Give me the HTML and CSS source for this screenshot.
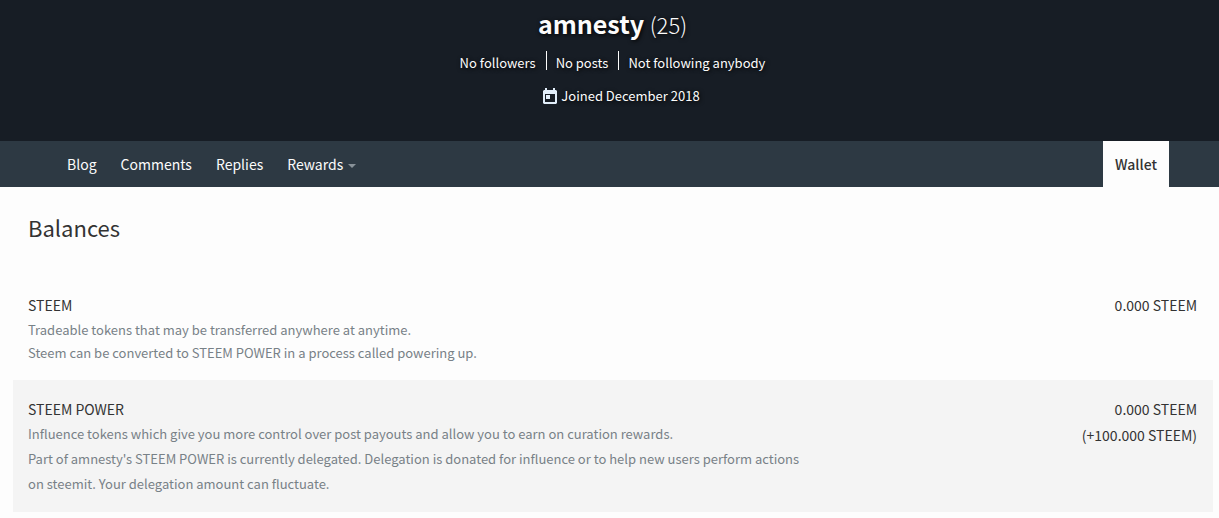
FILE: index.html
```html
<!DOCTYPE html>
<html lang="en">
<head>
    <meta charset="UTF-8">
    <meta name="viewport" content="width=device-width, initial-scale=1.0">
    <title>amnesty - Wallet</title>
    <link rel="stylesheet" href="styles.css">
</head>
<body>
    <header class="profile">
        <h1 class="profile-name">amnesty <span class="reputation">(25)</span></h1>
        <div class="stats">
            <a href="#followers">No followers</a>
            <a href="#posts">No posts</a>
            <a href="#following">Not following anybody</a>
        </div>
        <p class="joined">
            <svg class="calendar-icon" viewBox="0 0 16 16" aria-hidden="true">
                <path fill-rule="evenodd" d="M3 0h2v2h6V0h2v2h1l1 1v12l-1 1H2l-1-1V3l1-1h1zM3 6v8h10V6zM4 7h4v4H4z"/>
            </svg>
            <span>Joined December 2018</span>
        </p>
    </header>

    <nav class="menu">
        <div class="menu-left">
            <a href="#blog">Blog</a>
            <a href="#comments">Comments</a>
            <a href="#replies">Replies</a>
            <button type="button" class="dropdown">Rewards <span class="arrow"></span></button>
        </div>
        <a href="#wallet" class="active">Wallet</a>
    </nav>

    <main class="wallet">
        <h2 class="title">Balances</h2>

        <section class="balance">
            <div class="info">
                <h3>STEEM</h3>
                <p>Tradeable tokens that may be transferred anywhere at anytime.</p>
                <p>Steem can be converted to STEEM POWER in a process called powering up.</p>
            </div>
            <div class="amount">0.000 STEEM</div>
        </section>

        <section class="balance zebra">
            <div class="info">
                <h3>STEEM POWER</h3>
                <p>Influence tokens which give you more control over post payouts and allow you to earn on curation rewards.</p>
                <p class="delegated">Part of amnesty's STEEM POWER is currently delegated. Delegation is donated for influence or to help new users perform actions on steemit. Your delegation amount can fluctuate.</p>
            </div>
            <div class="amount">
                <div>0.000 STEEM</div>
                <div>(+100.000 STEEM)</div>
            </div>
        </section>
    </main>
</body>
</html>
```
FILE: styles.css
```css
* {
    box-sizing: border-box;
}

body {
    margin: 0;
    background-color: #fdfdfd;
    color: #333;
    font-family: "Source Sans Pro", "Noto Sans CJK SC", sans-serif;
    font-size: 14px;
}

h1, h2, h3, p {
    margin: 0;
    font-weight: 400;
}

a {
    color: inherit;
    text-decoration: none;
}

.profile {
    display: flex;
    flex-direction: column;
    align-items: center;
    padding: 5px 0 33px 6px;
    background-color: #171d25;
    color: #fcfcfc;
    text-shadow: 1px 1px 4px #000;
}

.profile-name {
    font-size: 25px;
    font-weight: 700;
    line-height: 36px;
}

.reputation {
    font-size: 22px;
    font-weight: 300;
}

.stats {
    display: flex;
    margin-top: 9px;
    font-size: 13px;
    line-height: 24px;
}

.stats a {
    position: relative;
    padding: 0 10px;
}

.stats a + a::before {
    content: "";
    position: absolute;
    top: 0;
    left: 0;
    width: 1px;
    height: 19px;
    background-color: #fcfcfc;
}

.joined {
    display: flex;
    align-items: center;
    gap: 3px;
    margin-top: 9px;
    padding-left: 17px;
    font-size: 13px;
    line-height: 24px;
}

.calendar-icon {
    width: 16px;
    height: 16px;
    fill: #e2eefa;
}

.menu {
    display: flex;
    justify-content: space-between;
    padding: 0 50px 0 55px;
    background-color: #2d3943;
    color: #fcfcfc;
    font-size: 14px;
    line-height: 46px;
}

.menu-left {
    display: flex;
}

.menu a,
.dropdown {
    padding: 0 12px;
}

.dropdown {
    display: flex;
    align-items: center;
    gap: 5px;
    border: 0;
    background: none;
    color: inherit;
    font: inherit;
    cursor: pointer;
}

.arrow {
    margin-top: 4px;
    border: 4px solid transparent;
    border-top-color: #889198;
    border-bottom: 0;
}

.menu .active {
    background-color: #fdfdfd;
    color: #333;
    font-weight: 500;
}

.wallet {
    padding: 20px 6px 6px 13px;
}

.title {
    padding-left: 15px;
    font-size: 22px;
    line-height: 40px;
}

.balance {
    display: flex;
    justify-content: space-between;
    padding: 16px 16px 16px 15px;
}

.title + .balance {
    margin-top: 29px;
}

.zebra {
    background-color: #f4f4f4;
}

.info {
    width: 66%;
    color: #788187;
    font-size: 13px;
    line-height: 23px;
}

.info h3 {
    color: #333;
    font-size: 14px;
    line-height: 26px;
}

.info .delegated {
    margin-top: 1px;
    line-height: 25px;
}

.amount {
    font-size: 14px;
    line-height: 26px;
    text-align: right;
}
```
